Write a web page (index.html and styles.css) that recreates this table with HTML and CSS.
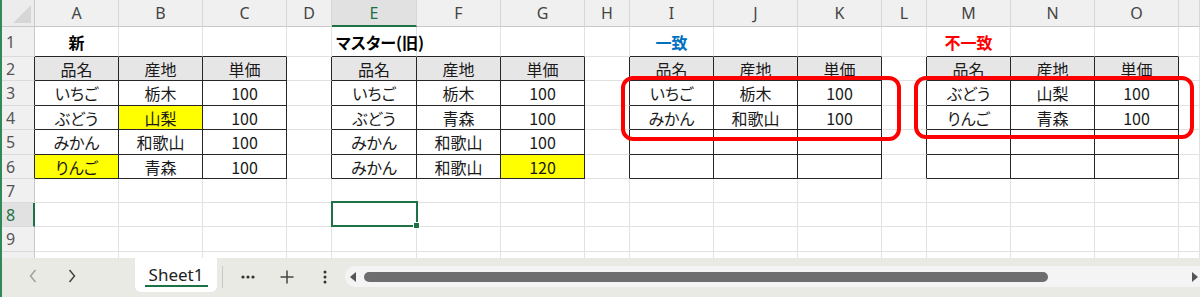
FILE: index.html
```html
<!DOCTYPE html>
<html lang="ja">
<head>
  <meta charset="UTF-8">
  <title>Sheet1</title>
  <link rel="stylesheet" href="styles.css">
</head>
<body>

  <div class="book">
    <div class="sheet">
      <table class="grid">
        <colgroup>
          <col class="w-rh">
          <col class="w-c"><col class="w-c"><col class="w-c"><col class="w-s">
          <col class="w-e"><col class="w-c"><col class="w-c"><col class="w-s">
          <col class="w-c"><col class="w-c"><col class="w-c"><col class="w-s">
          <col class="w-c"><col class="w-c"><col class="w-c"><col>
        </colgroup>

        <!-- column letters -->
        <tr class="r-head">
          <td class="corner"><span class="tri"></span></td>
          <td class="ch">A</td><td class="ch">B</td><td class="ch">C</td><td class="ch">D</td>
          <td class="ch on">E</td><td class="ch">F</td><td class="ch">G</td><td class="ch">H</td>
          <td class="ch">I</td><td class="ch">J</td><td class="ch">K</td><td class="ch">L</td>
          <td class="ch">M</td><td class="ch">N</td><td class="ch">O</td><td class="ch"></td>
        </tr>

        <tr class="r-title">
          <td class="rh">1</td>
          <td class="title edge-b">新</td><td class="edge-b"></td><td class="edge-b"></td><td></td>
          <td class="title left edge-b">マスター(旧)</td><td class="edge-b"></td><td class="edge-b"></td><td></td>
          <td class="title blue edge-b">一致</td><td class="edge-b"></td><td class="edge-b"></td><td></td>
          <td class="title red edge-b">不一致</td><td class="edge-b"></td><td class="edge-b"></td><td></td>
        </tr>

        <tr class="r24">
          <td class="rh edge-r">2</td>
          <td class="h">品名</td><td class="h">産地</td><td class="h">単価</td><td class="edge-r"></td>
          <td class="h">品名</td><td class="h">産地</td><td class="h">単価</td><td class="edge-r"></td>
          <td class="h">品名</td><td class="h">産地</td><td class="h">単価</td><td class="edge-r"></td>
          <td class="h">品名</td><td class="h">産地</td><td class="h">単価</td><td></td>
        </tr>

        <tr class="r25">
          <td class="rh edge-r">3</td>
          <td class="c">いちご</td><td class="c">栃木</td><td class="c">100</td><td class="edge-r"></td>
          <td class="c">いちご</td><td class="c">栃木</td><td class="c">100</td><td class="edge-r"></td>
          <td class="c">いちご</td><td class="c">栃木</td><td class="c">100</td><td class="edge-r"></td>
          <td class="c">ぶどう</td><td class="c">山梨</td><td class="c">100</td><td></td>
        </tr>

        <tr class="r24">
          <td class="rh edge-r">4</td>
          <td class="c">ぶどう</td><td class="c y">山梨</td><td class="c">100</td><td class="edge-r"></td>
          <td class="c">ぶどう</td><td class="c">青森</td><td class="c">100</td><td class="edge-r"></td>
          <td class="c">みかん</td><td class="c">和歌山</td><td class="c">100</td><td class="edge-r"></td>
          <td class="c">りんご</td><td class="c">青森</td><td class="c">100</td><td></td>
        </tr>

        <tr class="r25">
          <td class="rh edge-r">5</td>
          <td class="c">みかん</td><td class="c">和歌山</td><td class="c">100</td><td class="edge-r"></td>
          <td class="c">みかん</td><td class="c">和歌山</td><td class="c">100</td><td class="edge-r"></td>
          <td class="c"></td><td class="c"></td><td class="c"></td><td class="edge-r"></td>
          <td class="c"></td><td class="c"></td><td class="c"></td><td></td>
        </tr>

        <tr class="r24">
          <td class="rh edge-r">6</td>
          <td class="c y">りんご</td><td class="c">青森</td><td class="c">100</td><td class="edge-r"></td>
          <td class="c">みかん</td><td class="c">和歌山</td><td class="c y">120</td><td class="edge-r"></td>
          <td class="c"></td><td class="c"></td><td class="c"></td><td class="edge-r"></td>
          <td class="c"></td><td class="c"></td><td class="c"></td><td></td>
        </tr>

        <tr class="r24">
          <td class="rh">7</td>
          <td></td><td></td><td></td><td></td><td></td><td></td><td></td><td></td>
          <td></td><td></td><td></td><td></td><td></td><td></td><td></td><td></td>
        </tr>

        <tr class="r24">
          <td class="rh on">8</td>
          <td></td><td></td><td></td><td></td><td class="sel"></td><td></td><td></td><td></td>
          <td></td><td></td><td></td><td></td><td></td><td></td><td></td><td></td>
        </tr>

        <tr class="r25">
          <td class="rh">9</td>
          <td></td><td></td><td></td><td></td><td></td><td></td><td></td><td></td>
          <td></td><td></td><td></td><td></td><td></td><td></td><td></td><td></td>
        </tr>

        <tr class="r24">
          <td class="rh">10</td>
          <td></td><td></td><td></td><td></td><td></td><td></td><td></td><td></td>
          <td></td><td></td><td></td><td></td><td></td><td></td><td></td><td></td>
        </tr>
      </table>

      <!-- hand-drawn highlight rings -->
      <div class="ring ring-match"></div>
      <div class="ring ring-diff"></div>
    </div>

    <div class="tabbar">
      <div class="nav">
        <svg class="prev" width="10" height="16" viewBox="0 0 10 16"><path d="M7.5 2 L2.5 8 L7.5 14" fill="none" stroke="#a0a0a0" stroke-width="1.5"/></svg>
        <svg class="next" width="10" height="16" viewBox="0 0 10 16"><path d="M2.5 2 L7.5 8 L2.5 14" fill="none" stroke="#444" stroke-width="1.5"/></svg>
      </div>

      <div class="tab">Sheet1</div>
      <div class="divider"></div>

      <div class="tools">
        <svg width="14" height="6" viewBox="0 0 14 6"><circle cx="2" cy="3" r="1.6" fill="#333"/><circle cx="7" cy="3" r="1.6" fill="#333"/><circle cx="12" cy="3" r="1.6" fill="#333"/></svg>
        <svg width="14" height="14" viewBox="0 0 14 14"><path d="M7 0.5 V13.5 M0.5 7 H13.5" stroke="#444" stroke-width="1.5"/></svg>
        <svg class="more" width="4" height="14" viewBox="0 0 4 14"><circle cx="2" cy="2" r="1.5" fill="#333"/><circle cx="2" cy="7" r="1.5" fill="#333"/><circle cx="2" cy="12" r="1.5" fill="#333"/></svg>
      </div>

      <div class="hscroll">
        <svg class="arrow-l" width="6" height="10" viewBox="0 0 6 10"><path d="M6 0 L0 5 L6 10 Z" fill="#555"/></svg>
        <div class="thumb"></div>
        <svg class="arrow-r" width="6" height="10" viewBox="0 0 6 10"><path d="M0 0 L6 5 L0 10 Z" fill="#555"/></svg>
      </div>
    </div>
  </div>

</body>
</html>
```

FILE: styles.css
```css
body {
  margin: 0;
  background-color: #fff;
  font-family: "Noto Sans CJK JP", "Noto Sans", sans-serif;
  overflow: hidden;
}

.book {
  height: 297px;
  border-left: 2px solid #2e8b57;
  display: flex;
  flex-direction: column;
}

.sheet {
  position: relative;
  height: 258px;
  overflow: hidden;
}

/* grid */

.grid {
  border-collapse: separate;
  border-spacing: 0;
  table-layout: fixed;
  width: 1198px;
  background-color: #fff;
}

.w-rh { width: 33px; }
.w-c { width: 84px; }
.w-e { width: 85px; }
.w-s { width: 45px; }

.r-head { height: 27px; }
.r-title { height: 30px; }
.r24 { height: 24px; }
.r25 { height: 25px; }

.grid td {
  padding: 0 4px;
  border-right: 1px solid #e1e1e1;
  border-bottom: 1px solid #e1e1e1;
  font-size: 16px;
  line-height: 18px;
  color: #1a1a1a;
  text-align: center;
  white-space: nowrap;
  font-feature-settings: "palt";
  box-sizing: border-box;
}

/* headers */

.grid td.corner {
  position: relative;
  background-color: #ececec;
  border-right: 1px solid #c8c8c8;
  border-bottom: 1px solid #c8c8c8;
}

.corner .tri {
  position: absolute;
  right: 3px;
  bottom: 3px;
  width: 0;
  height: 0;
  border-left: 18px solid transparent;
  border-bottom: 18px solid #d6d6d6;
}

.grid td.ch {
  background-color: #f0f0f0;
  border-right: 1px solid #d6d6d6;
  border-bottom: 1px solid #c8c8c8;
  font-family: "Noto Sans", sans-serif;
  font-size: 16px;
  color: #444;
}

.grid td.ch.on {
  background-color: #e1e1e1;
  border-bottom: 2px solid #1e7145;
  color: #1e7145;
}

.grid td.rh {
  background-color: #f0f0f0;
  border-right: 1px solid #c8c8c8;
  border-bottom: 1px solid #dadada;
  font-family: "Noto Sans", sans-serif;
  font-size: 16px;
  color: #555;
  padding: 0 0 0 4px;
  text-align: left;
}

.grid td.rh.on {
  background-color: #e1e1e1;
  border-right: 2px solid #1e7145;
  color: #1e7145;
}

/* cell content */

.grid td.title {
  font-weight: bold;
  color: #000;
}

.grid td.left { text-align: left; }
.grid td.blue { color: #0070c0; }
.grid td.red { color: #ff0000; }

.grid td.h,
.grid td.c {
  border-right: 1px solid #262626;
  border-bottom: 1px solid #262626;
}

.grid td.h { background-color: #e7e6e6; }
.grid td.y { background-color: #ffff00; }

.grid td.edge-b { border-bottom: 1px solid #262626; }
.grid td.edge-r { border-right: 1px solid #262626; }

/* active cell */

.grid td.sel {
  position: relative;
}

.grid td.sel::after {
  content: "";
  position: absolute;
  left: -1px;
  top: -2px;
  right: -2px;
  bottom: -1px;
  border: 2px solid #1e7145;
}

.grid td.sel::before {
  content: "";
  position: absolute;
  right: -4px;
  bottom: -3px;
  width: 5px;
  height: 5px;
  background-color: #1e7145;
  border: 1px solid #fff;
  z-index: 1;
}

/* red rings */

.ring {
  position: absolute;
  border: 4px solid #ff0000;
  border-radius: 12px;
  box-sizing: border-box;
}

.ring-match {
  left: 619px;
  top: 76px;
  width: 280px;
  height: 65px;
}

.ring-diff {
  left: 912px;
  top: 76px;
  width: 280px;
  height: 63px;
}

/* sheet tabs */

.tabbar {
  flex: 1;
  display: flex;
  align-items: flex-start;
  background-color: #e9eae4;
}

.nav {
  display: flex;
  gap: 29px;
  padding: 10px 0 0 26px;
  width: 133px;
  box-sizing: border-box;
}

.tab {
  width: 82px;
  height: 34px;
  box-sizing: border-box;
  padding-top: 5px;
  background-color: #fff;
  border-radius: 0 0 6px 6px;
  font-family: "Noto Sans", sans-serif;
  font-size: 17px;
  color: #222;
  text-align: center;
  position: relative;
}

.tab::after {
  content: "";
  position: absolute;
  left: 10px;
  right: 9px;
  bottom: 5px;
  height: 2px;
  background-color: #1e7145;
}

.divider {
  width: 1px;
  height: 22px;
  margin: 8px 0 0 5px;
  background-color: #c9c9c4;
}

.tools {
  display: flex;
  align-items: center;
  height: 22px;
  margin: 8px 0 0 0;
  padding-left: 18px;
  gap: 25px;
}

.tools .more {
  margin-left: 4px;
}

.hscroll {
  flex: 1;
  display: flex;
  align-items: center;
  height: 21px;
  margin: 8px 0 0 18px;
  padding-left: 5px;
  background-color: #f4f4f4;
  border-radius: 10px 0 0 10px;
}

.thumb {
  width: 684px;
  height: 10px;
  margin-left: 8px;
  background-color: #6e6e6e;
  border-radius: 5px;
}

.arrow-r {
  margin-left: auto;
  margin-right: 2px;
}
```
